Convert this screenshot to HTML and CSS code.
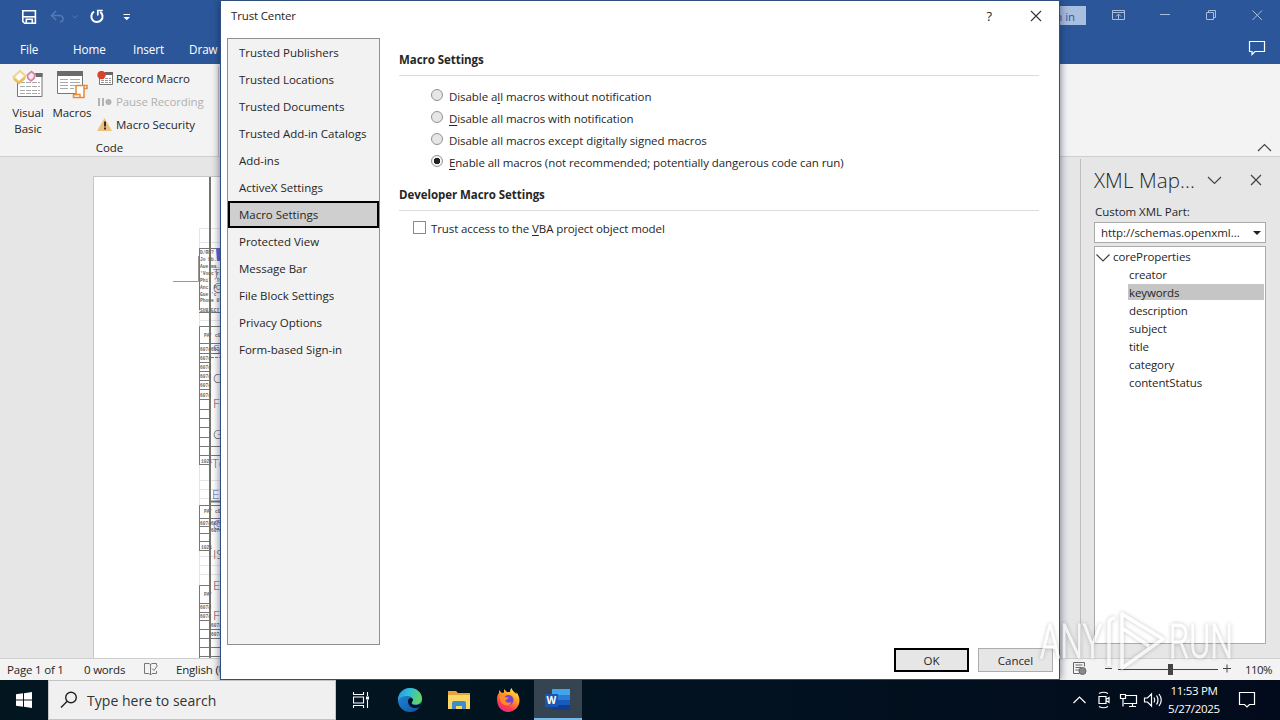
FILE: index.html
```html
<!DOCTYPE html>
<html lang="en">
<head>
  <meta charset="UTF-8">
  <title>Trust Center</title>
  <link rel="stylesheet" href="styles.css">
</head>
<body>

<div class="desktop">
  <!-- Word window -->
  <div class="word">
    <div class="titlebar">
      <svg class="quick" width="140" height="32" viewBox="0 0 140 32" fill="none">
        <g stroke="#fff" stroke-width="1.6">
          <path d="M22.8 10.8h12.6v12.5H24.6l-1.8-1.8z"/>
          <path d="M23 16.8h12"/>
          <path d="M26.3 23v-3.8h6V23"/>
        </g>
        <g stroke="#5378b4">
          <path d="M56 11l-4.500 4.500 4.500 4.500M52 15.500h7c5 0 5.500 6 1 6.500" stroke-width="1.700"/>
          <path d="M72.500 15.500l2.500 2.500 2.500-2.500"/>
        </g>
        <g stroke="#fff">
          <path d="M94 11.700a5.600 5.600 0 1 0 6.200 .2" stroke-width="2"/>
          <path d="M97.800 15.500v-5h5" stroke-width="1.700"/>
          <path d="M123.500 14.500h6.500"/>
        </g>
        <path d="M123.500 17h6.500l-3.200 3.200z" fill="#fff"/>
      </svg>
      <div class="window-tools">
        <span class="signin">Sign in</span>
        <svg width="190" height="32" viewBox="0 0 190 32" fill="none" stroke="#a9bddd">
          <path d="M22.500 10.500h12v9h-12zM22.500 12.500h12M28.500 19v-4.500M26 16.500l2.500-2.500 2.500 2.500"/>
          <path d="M70 14.500h10"/>
          <path d="M116.500 12.500h7v7h-7zM118.500 12v-1.500h7v7h-1.500"/>
          <path d="M162.500 10.500l9.500 9.500M172 10.500l-9.500 9.500"/>
        </svg>
      </div>
    </div>

    <div class="tabs">
      <span class="tab tab-file">File</span>
      <span class="tab tab-home">Home</span>
      <span class="tab tab-insert">Insert</span>
      <span class="tab">Draw</span>
      <svg class="comment" width="18" height="16" viewBox="0 0 18 16" fill="none" stroke="#fff" stroke-width="1.200">
        <path d="M1.500 1.500h15v10H7l-3 3v-3H1.500z"/>
      </svg>
    </div>

    <div class="ribbon">
      <div class="group">
        <div class="group-tools">
          <div class="big big-vb">
            <svg width="32" height="32" viewBox="0 0 32 32" fill="none">
              <path d="M5.500 12v17.500h24.500V6" fill="#fff" stroke="#777"/>
              <path d="M23 6h7.500v4H24z" fill="#6b6b6b"/>
              <path d="M8 15.500h20M8 19.500h20M8 23.500h20M8 26.500h20" stroke="#aaa" stroke-dasharray="5 1"/>
              <path d="M1.500 10L8 4l5.500 5-6.500 6z" fill="#fff" stroke="#f0d289" stroke-width="2"/>
              <path d="M1.500 11v2l5.500 4.500 6.500-5.500v-3L7 14.500z" fill="#e9bd5a"/>
              <path d="M15.500 8l4-3.500 3.500 3-1 4-3 2.500-3-2.500z" fill="#fbe9f1" stroke="#db7fa8" stroke-width="1.700"/>
            </svg>
            <span>Visual<br>Basic</span>
          </div>
          <div class="big big-macros">
            <svg width="32" height="32" viewBox="0 0 32 32" fill="none">
              <path d="M1.500 4.500h25v22h-25z" fill="#fff" stroke="#777"/>
              <path d="M1 4h26v5H1z" fill="#6b6b6b"/>
              <path d="M4 12.500h8M14 12.500h10M4 15.500h8M14 15.500h10M4 18.500h8M14 18.500h8M4 21.500h8M14 21.500h4" stroke="#aaa"/>
              <path d="M21 18.500h10v3h-3v9H17.500v-3H20v-8z" fill="#fff" stroke="#e38a3c" stroke-width="1.500"/>
              <path d="M28 21v-2.500M19 27.500h5v3" stroke="#e38a3c" stroke-width="1.400"/>
            </svg>
            <span>Macros</span>
          </div>
          <div class="small-tools">
            <div class="small">
              <svg width="17" height="16" viewBox="0 0 17 16" fill="none">
                <path d="M2.500 2.500h13v11h-13z" fill="#fff" stroke="#777"/>
                <path d="M8 1h8v3H8z" fill="#666"/>
                <path d="M4 7.500h10M4 9.500h10M4 11.500h10" stroke="#999" stroke-dasharray="3 1"/>
                <circle cx="4.500" cy="4" r="4.200" fill="#d8432c"/>
              </svg>
              <span>Record Macro</span>
            </div>
            <div class="small disabled">
              <svg width="17" height="16" viewBox="0 0 17 16" fill="#b4b4b4">
                <path d="M1 4h2v8H1zM5 4h2v8H5z"/><circle cx="11.500" cy="8" r="3"/>
              </svg>
              <span>Pause Recording</span>
            </div>
            <div class="small">
              <svg width="17" height="16" viewBox="0 0 17 16">
                <path d="M7.500 1L15 14H0z" fill="#eec27e"/>
                <path d="M7 4.500h2v5H7zM7 10.500h2v2H7z" fill="#333"/>
              </svg>
              <span>Macro Security</span>
            </div>
          </div>
        </div>
        <div class="group-name">Code</div>
      </div>
      <svg class="collapse" width="15" height="9" viewBox="0 0 15 9" fill="none" stroke="#444" stroke-width="1.200">
        <path d="M1 8l6.500-6.500L14 8"/>
      </svg>
    </div>

    <div class="workspace">
      <svg class="page" width="400" height="482" viewBox="0 0 400 482">
        <path d="M0.500 482V0.500H400V482" fill="#fff" stroke="#c6c6c6"/>
        <g fill="none" stroke="#e4e4ea">
          <path d="M106.500 482V52.500H130M106 66.500h24M106 144.500h24M106 304.500h24M106 313.500h24M106 322.500h24M106 380.500h24M106 389.500h24M106 398.500h24"/>
        </g>
        <path d="M80 105.500h25.500V80" fill="none" stroke="#999"/>
        <g fill="none" stroke="#777">
          <path d="M106 72.500h24M106.500 134V72.500M106 136.500h24" />
          <path d="M106.500 288V150.500H130M106 167.500h24M106 177.500h24M106 186.500h11M106 195.500h11M106 204.500h11M106 213.500h11M106 223.500h11M106 233.500h11M106 242.500h11M106 251.500h11M106 261.500h11M106 270.500h24M106 279.500h24M106 288.500h11"/>
          <path d="M106.500 374V329.500H130M106 342.500h24M106 350.500h11M106 357.500h11M106 365.500h11M106 374.500h11"/>
          <path d="M106.500 482V409.500H117M106 427.500h11M106 436.500h11M106 444.500h11M106 453.500h24M106 462.500h24M106 471.500h24M106 480.500h24"/>
        </g>
        <path d="M117 1v481" stroke="#74746a" stroke-width="2"/>
        <path d="M118 325.500h12" stroke="#777" stroke-width="2"/>
        <path d="M123 72h7v13h-6z" fill="#6a62d8"/>
        <path d="M118 181.500h12" stroke="#7772b8" stroke-dasharray="3 1"/>
        <g class="tiny">
          <text x="107" y="78">D/Rb?</text>
          <text x="107" y="85">Jo Db.</text>
          <text x="107" y="92">Aue ma.</text>
          <text x="107" y="99">'Vouc'r</text>
          <text x="107" y="106">Phil 'T0'</text>
          <text x="107" y="113">Anc. P</text>
          <text x="107" y="120">Gue 'c'</text>
          <text x="107" y="126">Phone 07</text>
          <text x="107" y="136">SUBJECT</text>
          <text x="111" y="161">PA' cOL</text>
          <text x="107" y="175">607d</text><text x="118" y="175">607d</text>
          <text x="107" y="184">607d</text>
          <text x="107" y="193">607d</text>
          <text x="107" y="202">607d</text>
          <text x="107" y="211">607d</text>
          <text x="107" y="221">607d</text>
          <text x="108" y="287">1021</text>
          <text x="111" y="337">PA' cOL</text>
          <text x="107" y="349">607d</text><text x="118" y="349">607d</text>
          <text x="118" y="356">607d</text>
          <text x="108" y="373">1021</text>
          <text x="111" y="420">PA'</text>
          <text x="107" y="433">607d</text>
          <text x="107" y="442">607d</text>
          <text x="118" y="451">607d</text>
          <text x="118" y="460">607d</text>
        </g>
        <g class="body-text">
          <text x="120" y="102">T</text>
          <text x="120" y="116">@</text>
          <text x="120" y="178" class="link">S</text>
          <text x="120" y="207">C</text>
          <text x="120" y="232">F</text>
          <text x="120" y="263">G</text>
          <text x="119" y="292" class="link">Te</text>
          <text x="119" y="323" class="link">E</text>
          <text x="120" y="353" class="link">@</text>
          <text x="120" y="383">IS</text>
          <text x="120" y="414">E</text>
          <text x="120" y="444">F</text>
        </g>
      </svg>

      <div class="pane">
        <div class="pane-head">
          <span class="pane-title">XML Map...</span>
          <svg width="70" height="20" viewBox="0 0 70 20" fill="none" stroke="#444" stroke-width="1.200">
            <path d="M12 7l6.500 6.500L25 7M55 5l10 10M65 5L55 15"/>
          </svg>
        </div>
        <div class="pane-label">Custom XML Part:</div>
        <div class="combo"><span>http://schemas.openxml...</span><i class="arrow"></i></div>
        <div class="tree">
          <div class="root">
            <svg width="14" height="9" viewBox="0 0 14 9" fill="none" stroke="#444" stroke-width="1.200"><path d="M.5 1.500L7 8l6.500-6.500"/></svg>
            <span>coreProperties</span>
          </div>
          <div class="leaf">creator</div>
          <div class="leaf selected">keywords</div>
          <div class="leaf">description</div>
          <div class="leaf">subject</div>
          <div class="leaf">title</div>
          <div class="leaf">category</div>
          <div class="leaf">contentStatus</div>
        </div>
      </div>
    </div>

    <div class="statusbar">
      <span class="st-page">Page 1 of 1</span>
      <span class="st-words">0 words</span>
      <svg class="st-proof" width="16" height="14" viewBox="0 0 16 14" fill="none" stroke="#777">
        <path d="M7.500 13V2.500L6 1.500H1.500v10H6l1.500 1.500 1.500-1.500h4.500V9M7.500 2.500L9 1.500h4.500v2M9 6.500l2 2 3.500-5"/>
      </svg>
      <span class="st-lang">English (United States)</span>
      <div class="zoom">
        <svg width="160" height="20" viewBox="0 0 160 20" fill="none" stroke="#444">
          <path d="M.5 3.500h11v4M.5 3.500v11h6M2.500 6h7M2.500 8.500h6M2.500 11h4" stroke="#666"/>
          <circle cx="9.500" cy="12" r="3.500" fill="#888" stroke="#666"/>
          <path d="M32 9.500h7M45 10.500h100M150 9.500h8M154 5.500v8"/>
          <path d="M95 5h5v11h-5z" fill="#444" stroke="none"/>
        </svg>
        <span>110%</span>
      </div>
    </div>
  </div>

  <!-- Windows taskbar -->
  <div class="taskbar">
    <div class="start">
      <svg width="16" height="16" viewBox="0 0 16 16" fill="#fff">
        <path d="M0 2.300l7-1v6.200H0zM8 1.200L16 0v7.500H8zM0 8.500h7v6.200l-7-1zM8 8.500h8V16l-8-1.200z"/>
      </svg>
    </div>
    <div class="search">
      <svg width="18" height="18" viewBox="0 0 18 18" fill="none" stroke="#222" stroke-width="1.400">
        <circle cx="11" cy="6.500" r="5.300"/><path d="M7.200 10.300L1 16.500"/>
      </svg>
      <span>Type here to search</span>
    </div>
    <div class="app">
      <svg width="16" height="16" viewBox="0 0 16 16" fill="none" stroke="#fff" stroke-width="1.100">
        <path d="M.5 0v2.500h10V0M.5 16v-2.500h10V16M.5 5h10v6H.5zM14.500 0v4M14.500 8v8"/><path d="M13 4.500h3v3h-3z" fill="#fff" stroke="none"/>
      </svg>
    </div>
    <div class="app">
      <svg width="24" height="24" viewBox="0 0 24 24">
        <defs>
          <linearGradient id="edgeTop" x1="0" y1="0" x2="1" y2=".3"><stop offset="0" stop-color="#2492df"/><stop offset=".5" stop-color="#30bfd4"/><stop offset="1" stop-color="#5fd36b"/></linearGradient>
          <linearGradient id="edgeLow" x1="0" y1="0" x2="1" y2="1"><stop offset="0" stop-color="#1f8fe0"/><stop offset="1" stop-color="#124f9e"/></linearGradient>
        </defs>
        <circle cx="12" cy="12" r="12" fill="url(#edgeLow)"/>
        <path d="M0 11C1 4 6 0 12 0c7 0 12 5 12 10.500 0 4-3 6-6.500 6-2.500 0-4.500-1-3.500-2.500 2-3-.5-6-4-6C5.500 8 1.500 9 0 13z" fill="url(#edgeTop)"/>
        <path d="M15 11.500c-2-3-5-1-5 2 0 4 4 7 8 6.500 2 0 3.500-1 4.300-1.500L24 14c-2 2.800-4 3-6.500 3-3 0-4.500-1-3.500-2.800.7-1 1-1.700 1-2.700z" fill="#02131f"/>
      </svg>
    </div>
    <div class="app">
      <svg width="22" height="20" viewBox="0 0 22 20">
        <path d="M0 1h8l2 2h12v16H0z" fill="#e8a33a"/>
        <path d="M0 5h22v14H0z" fill="#fbd766"/>
        <path d="M4 19v-6q0-2 2-2h10q2 0 2 2v6h-4v-3H8v3z" fill="#3c8fcb"/>
      </svg>
    </div>
    <div class="app">
      <svg width="24" height="24" viewBox="0 0 24 24">
        <defs>
          <linearGradient id="fox" x1=".8" y1="0" x2=".25" y2="1"><stop offset="0" stop-color="#fff04a"/><stop offset=".4" stop-color="#ff9a22"/><stop offset=".75" stop-color="#ff3b50"/><stop offset="1" stop-color="#e5298c"/></linearGradient>
        </defs>
        <path d="M1 11c0-3 1-5 2-6V2l3 3 2-.5V1l3 3 3 0c0-2 1-3.500 1.500-4 1 3 3 4 5 6V4c2 3 3 6 3 8.500C23.500 19 18 24 12 24S1 19 1 11z" fill="url(#fox)"/>
        <circle cx="12.500" cy="12" r="5" fill="#7341d6"/>
        <path d="M3.500 8c3-1 5 0 6 1l3 .7c-.5 2-3 1.300-3 3.300 1 2 4 2 6 1-1 3-4 4-7 3-3-1.200-5-5-5-9z" fill="#ff8a2a"/>
      </svg>
    </div>
    <div class="app active">
      <svg width="26" height="22" viewBox="0 0 26 22">
        <path d="M7 0h18v6H7z" fill="#41a5ee"/><path d="M7 6h18v5H7z" fill="#2b7cd3"/><path d="M7 11h18v5H7z" fill="#185abd"/><path d="M7 16h18v5H7z" fill="#103f91"/>
        <path d="M0 5h13v13H0z" fill="#1d55b5"/>
        <text x="1.500" y="15" class="word-w">W</text>
      </svg>
    </div>
    <div class="tray">
      <svg width="96" height="20" viewBox="0 0 96 20" fill="none" stroke="#fff" stroke-width="1.200">
        <path d="M4.500 13l6-6 6 6"/>
        <path d="M30 6.500h7v7h-7zM37 9.500l3-2v5l-3-2M30 3.500q4.500-2.500 9 0M30 16.500q4.500 2.500 9 0"/>
        <path d="M57 5.500h10.500v8H55M60 16.500h7M63.500 14v2M51.500 4.500h5v4h-5zM54 8.500v8"/>
        <path d="M75.500 8h3l4-4v12l-4-4h-3zM85 7.500q1.500 2.500 0 5M87.500 5.500q3 4.500 0 9M90 4q4.500 6 0 12"/>
      </svg>
      <div class="clock">11:53 PM<br>5/27/2025</div>
      <svg class="notify" width="18" height="18" viewBox="0 0 18 18" fill="none" stroke="#fff" stroke-width="1.200">
        <path d="M1.500 1.500h15v12h-5L9 16l-2.500-2.500h-5z"/>
      </svg>
    </div>
  </div>

  <!-- Trust Center dialog -->
  <div class="dialog">
    <div class="dialog-title">
      <span>Trust Center</span>
      <span class="help">?</span>
      <svg width="12" height="12" viewBox="0 0 12 12" fill="none" stroke="#333" stroke-width="1.100"><path d="M1 1l10 10M11 1L1 11"/></svg>
    </div>
    <div class="dialog-body">
      <div class="nav">
        <div class="nav-item">Trusted Publishers</div>
        <div class="nav-item">Trusted Locations</div>
        <div class="nav-item">Trusted Documents</div>
        <div class="nav-item">Trusted Add-in Catalogs</div>
        <div class="nav-item">Add-ins</div>
        <div class="nav-item">ActiveX Settings</div>
        <div class="nav-item current">Macro Settings</div>
        <div class="nav-item">Protected View</div>
        <div class="nav-item">Message Bar</div>
        <div class="nav-item">File Block Settings</div>
        <div class="nav-item">Privacy Options</div>
        <div class="nav-item">Form-based Sign-in</div>
      </div>
      <div class="settings">
        <h2>Macro Settings</h2>
        <div class="options">
          <div class="option"><i class="radio"></i><span>Disable a<u>l</u>l macros without notification</span></div>
          <div class="option"><i class="radio"></i><span><u>D</u>isable all macros with notification</span></div>
          <div class="option"><i class="radio"></i><span>Disable all macros except di<u>g</u>itally signed macros</span></div>
          <div class="option"><i class="radio checked"></i><span><u>E</u>nable all macros (not recommended; potentially dangerous code can run)</span></div>
        </div>
        <h2>Developer Macro Settings</h2>
        <div class="check"><i class="box"></i><span>Trust access to the <u>V</u>BA project object model</span></div>
      </div>
    </div>
    <div class="buttons">
      <div class="btn default">OK</div>
      <div class="btn">Cancel</div>
    </div>
  </div>

  <!-- Watermark over everything -->
  <svg class="watermark" width="230" height="76" viewBox="0 0 230 76">
    <text x="9" y="54" textLength="62" lengthAdjust="spacingAndGlyphs">ANY</text>
    <text x="138" y="54" textLength="64" lengthAdjust="spacingAndGlyphs">RUN</text>
    <path d="M78 62V20q0-6 6-6M91 10v54l41-29zM91 10v14l27 18" fill="none" stroke="#fff" stroke-width="3.500" stroke-linejoin="round"/>
  </svg>
</div>

</body>
</html>
```
FILE: styles.css
```css
body {
  margin: 0;
  font-family: "Open Sans", "Noto Sans", sans-serif;
  font-size: 11.5px;
  letter-spacing: -0.05px;
  color: #262626;
}

.desktop {
  position: relative;
  width: 1280px;
  height: 720px;
  overflow: hidden;
}

svg { display: block; flex: none; }

/* Word window */
.word {
  display: flex;
  flex-direction: column;
  height: 680px;
  background: #e6e6e6;
}

.titlebar, .tabs {
  display: flex;
  background: #2b579a;
  color: #fff;
  height: 32px;
}

.titlebar { justify-content: space-between; }

.window-tools { display: flex; }

.signin {
  box-sizing: border-box;
  height: 19px;
  width: 76px;
  margin-top: 6px;
  padding-right: 11px;
  line-height: 21px;
  text-align: right;
  background: #a9bfdf;
  color: #2b579a;
}

.window-tools svg { margin-left: 4px; }

.tabs {
  font-size: 11.7px;
  line-height: 35px;
}

.tab-file { margin-left: 20px; width: 53px; }
.tab-home { width: 60px; }
.tab-insert { width: 56px; }
.comment { margin: 8px 14px 0 auto; }

.ribbon {
  box-sizing: border-box;
  height: 93px;
  display: flex;
  justify-content: space-between;
  align-items: flex-end;
  background: #f3f3f3;
  border-bottom: 1px solid #cfcfcf;
}

.group {
  box-sizing: border-box;
  width: 219px;
  height: 89px;
  border-right: 1px solid #c8c8c8;
}

.group-tools { display: flex; height: 70px; }

.big {
  display: flex;
  flex-direction: column;
  align-items: center;
  line-height: 16px;
  text-align: center;
}

.big span { margin-top: 6px; }
.big-vb { width: 32px; margin-left: 12px; }
.big-macros { width: 44px; margin-left: 6px; }

.small-tools { margin-left: 3px; }

.small {
  display: flex;
  align-items: center;
  gap: 2px;
  height: 23px;
  white-space: nowrap;
}

.disabled { color: #b0b0b0; letter-spacing: -0.1px; }

.group-name { width: 219px; text-align: center; line-height: 21px; }

.collapse { margin: 0 8px 4px 0; }

.workspace {
  flex: 1;
  min-height: 0;
  display: flex;
  justify-content: space-between;
  overflow: hidden;
}

.page { margin: 19px 0 0 93px; }

.tiny { font-family: "Liberation Mono", monospace; font-size: 4.6px; letter-spacing: 0; font-weight: bold; fill: #666; }
.body-text { font-family: "Open Sans", sans-serif; font-weight: 300; font-size: 13px; fill: #555; }
.link { fill: #5b56b8; }

.pane {
  box-sizing: border-box;
  width: 200px;
  margin-top: 2px;
  padding: 0 14px 14px 13px;
  border-left: 1px solid #bdbdbd;
  display: flex;
  flex-direction: column;
}

.pane-head { display: flex; align-items: center; height: 42px; }

.pane-title {
  width: 102px;
  font-size: 20.5px;
  font-weight: 300;
  letter-spacing: 0.1px;
  white-space: nowrap;
  line-height: 48px;
}

.pane-label { line-height: 21px; height: 21px; margin-left: 1px; }

.combo {
  box-sizing: border-box;
  height: 21px;
  display: flex;
  align-items: center;
  justify-content: space-between;
  padding: 0 4px 0 6px;
  border: 1px solid #ababab;
  background: #fff;
}

.arrow {
  border: 4px solid transparent;
  border-top-color: #222;
  border-bottom: 0;
}

.tree {
  flex: 1;
  margin-top: 3px;
  padding: 1px 1px 0 1px;
  border: 1px solid #ababab;
  background: #fff;
  line-height: 18px;
  letter-spacing: -0.12px;
}

.root { display: flex; align-items: center; gap: 3px; height: 18px; }
.leaf { margin: 0 0 2px 32px; padding-left: 1px; height: 16px; line-height: 17px; }
.selected { background: #c5c5c5; }

.statusbar {
  box-sizing: border-box;
  height: 22px;
  display: flex;
  line-height: 21px;
  white-space: nowrap;
  letter-spacing: -0.2px;
  background: #f3f3f3;
  border-top: 1px solid #cfcfcf;
}

.st-page { margin-left: 7px; width: 77px; }
.st-words { width: 59px; }
.st-proof { margin: 3px 17px 0 0; }
.zoom { display: flex; margin-left: auto; gap: 12px; padding-right: 8px; }
.zoom span { width: 27px; letter-spacing: -0.6px; }

/* Dialog */
.dialog {
  position: absolute;
  left: 220px;
  top: 0;
  box-sizing: border-box;
  width: 840px;
  height: 680px;
  border: 1px solid #2f4f80;
  background: #fff;
  box-shadow: 0 0 8px rgba(20, 30, 60, 0.6);
  clip-path: inset(0 -10px 0 -10px);
}

.dialog-title {
  display: flex;
  align-items: center;
  height: 30px;
  padding: 0 17px 0 10px;
  letter-spacing: -0.15px;
}

.dialog-title span { line-height: 30px; height: 30px; }

.dialog-title .help { margin-left: auto; margin-right: 38px; font-size: 13px; }

.dialog-body { display: flex; padding: 7px 20px 0 6px; }

.nav {
  box-sizing: border-box;
  width: 153px;
  height: 607px;
  border: 1px solid #8f8f8f;
  background: #f2f2f2;
}

.nav-item {
  box-sizing: border-box;
  height: 27px;
  padding-left: 11px;
  line-height: 27px;
  letter-spacing: -0.02px;
}

.current {
  padding-left: 9px;
  line-height: 23px;
  border: 2px solid #000;
  background: #cfcfcf;
}

.settings { width: 640px; margin-left: 19px; padding-top: 9px; }

.settings h2 {
  margin: 0;
  height: 28px;
  line-height: 26px;
  font-size: 11.5px;
  font-weight: bold;
  border-bottom: 1px solid #dcdcdc;
}

.options { height: 86px; padding: 10px 0 10px 32px; }

.option {
  display: flex;
  align-items: flex-start;
  gap: 6px;
  height: 22px;
  line-height: 22px;
  letter-spacing: -0.065px;
}

.radio {
  box-sizing: border-box;
  width: 12px;
  height: 12px;
  margin-top: 3px;
  border: 1px solid #929292;
  border-radius: 50%;
  background: #e6e6e6;
}

.checked { background: radial-gradient(circle, #222 0 3px, #f4f4f4 3.5px); }

.check {
  display: flex;
  gap: 5px;
  padding: 7px 0 0 14px;
  line-height: 22px;
  letter-spacing: -0.1px;
}

.box {
  box-sizing: border-box;
  width: 13px;
  height: 13px;
  margin-top: 3px;
  border: 1px solid #8a8a8a;
}

u { text-underline-offset: 2px; }

.buttons { display: flex; justify-content: flex-end; gap: 9px; padding: 3px 6px 0 0; }

.btn {
  box-sizing: border-box;
  width: 75px;
  height: 24px;
  line-height: 23px;
  text-align: center;
  border: 1px solid #adadad;
  background: #e6e6e6;
}

.default { border: 2px solid #000; line-height: 21px; }

/* Taskbar */
.taskbar {
  display: flex;
  height: 40px;
  background: linear-gradient(90deg, #021620, #021220 60%, #020b1b);
  color: #fff;
}

.start { width: 48px; display: flex; align-items: center; justify-content: center; }

.search {
  box-sizing: border-box;
  width: 288px;
  display: flex;
  align-items: center;
  gap: 9px;
  padding-left: 11px;
  border: 1px solid #c4c4c4;
  background: #f0f0f0;
  color: #333;
  font-size: 14px;
  letter-spacing: 0.03px;
}

.app { width: 49px; display: flex; align-items: center; justify-content: center; }

.active {
  box-sizing: border-box;
  width: 48px;
  margin-left: 2px;
  padding-top: 2px;
  background: #354450;
  border-bottom: 2px solid #76b9ed;
}

.word-w { font: bold 10px "Open Sans", sans-serif; fill: #fff; }

.tray { display: flex; align-items: center; margin-left: auto; padding-right: 24px; }

.tray > svg:first-child { margin-right: -2px; }
.clock { width: 66px; margin-left: -2px; text-align: center; line-height: 18px; letter-spacing: -0.3px; }
.notify { margin-left: 11px; }

.watermark {
  position: absolute;
  left: 1031px;
  top: 604px;
  opacity: 0.65;
  filter: drop-shadow(0 0 2px rgba(0, 0, 0, 0.35));
}

.watermark text { font: 300 49px Roboto, sans-serif; letter-spacing: 0; fill: #fff; stroke: #fff; }
```
